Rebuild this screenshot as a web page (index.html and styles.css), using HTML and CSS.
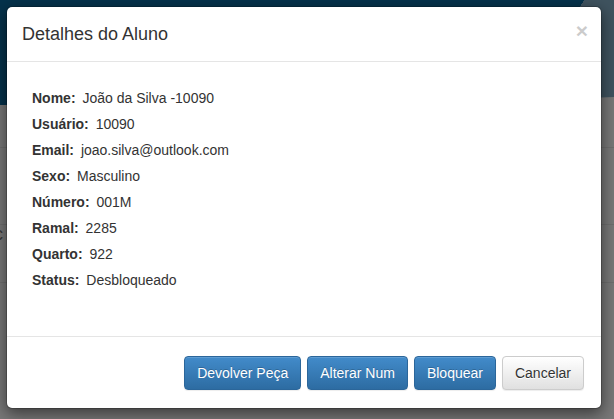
FILE: index.html
```html
<!DOCTYPE html>
<html lang="pt">
<head>
<meta charset="utf-8">
<title>Detalhes do Aluno</title>
<link rel="stylesheet" href="styles.css">
</head>
<body>
<div class="page">
  <div class="navbar"></div>
  <div class="content">
    <div class="row-line r1"></div>
    <div class="row-line r2"><span class="ghost">c</span></div>
    <div class="row-line r3"></div>
  </div>
</div>
<div class="backdrop"></div>
<div class="modal">
  <div class="modal-header">
    <h4 class="modal-title">Detalhes do Aluno</h4>
    <span class="close">&times;</span>
  </div>
  <div class="modal-body">
    <div class="field"><b>Nome:</b> João da Silva -10090</div>
    <div class="field"><b>Usuário:</b> 10090</div>
    <div class="field"><b>Email:</b> joao.silva@outlook.com</div>
    <div class="field"><b>Sexo:</b> Masculino</div>
    <div class="field"><b>Número:</b> 001M</div>
    <div class="field"><b>Ramal:</b> 2285</div>
    <div class="field"><b>Quarto:</b> 922</div>
    <div class="field"><b>Status:</b> Desbloqueado</div>
  </div>
  <div class="modal-footer">
    <button class="btn btn-primary">Devolver Peça</button>
    <button class="btn btn-primary">Alterar Num</button>
    <button class="btn btn-primary">Bloquear</button>
    <button class="btn btn-default">Cancelar</button>
  </div>
</div>
</body>
</html>
```
FILE: styles.css
```css
html, body {
  margin: 0;
  padding: 0;
  width: 614px;
  height: 419px;
  overflow: hidden;
  font-family: "Liberation Sans", Arial, Helvetica, sans-serif;
  font-size: 14px;
  line-height: 1.42857;
  color: #333;
}
.page {
  width: 614px;
  height: 419px;
  background: #f0f0f0;
}
.navbar {
  height: 105px;
  background: #0b6496;
  clip-path: polygon(0 0, 100% 0, 100% 97px, 0 105px);
  background-image: linear-gradient(125deg, #0b6496 85%, #7fa6bf 85%);
}
.content {
  display: flex;
  flex-direction: column;
}
.row-line {
  border-bottom: 1px solid #ddd;
  height: 42px;
  position: relative;
}
.r1 { height: 42px; }
.r2 { height: 76px; }
.r3 { height: 57px; }
.ghost {
  font-size: 18px;
  color: #777;
  margin-left: -6px;
  display: inline-block;
  margin-top: 74px;
}
.backdrop {
  position: absolute;
  left: 0;
  top: 0;
  width: 614px;
  height: 419px;
  background: rgba(0, 0, 0, 0.5);
}
.modal {
  position: absolute;
  left: 6px;
  top: 6px;
  width: 594px;
  background: #fff;
  border: 1px solid rgba(0, 0, 0, 0.2);
  border-radius: 6px;
  box-shadow: 0 5px 15px rgba(0, 0, 0, 0.5);
  background-clip: padding-box;
}
.modal-header {
  display: flex;
  justify-content: space-between;
  align-items: flex-start;
  padding: 15px 15px 13px 15px;
  border-bottom: 1px solid #e5e5e5;
}
.modal-title {
  margin: 0;
  font-size: 18px;
  font-weight: normal;
  line-height: 1.42857;
  color: #333;
}
.close {
  font-size: 21px;
  font-weight: bold;
  line-height: 1;
  color: #000;
  opacity: 0.2;
  margin-top: -2px;
  margin-right: -2px;
}
.modal-body {
  padding: 26px 20px 25px 25px;
}
.field {
  line-height: 20px;
  margin-bottom: 6px;
}
.field b {
  font-weight: bold;
  margin-right: 3px;
}
.modal-footer {
  display: flex;
  justify-content: flex-end;
  gap: 6px;
  padding: 19px 17px 18px 20px;
  margin-top: 15px;
  border-top: 1px solid #e5e5e5;
}
.btn {
  font-family: "Liberation Sans", Arial, Helvetica, sans-serif;
  font-size: 14px;
  line-height: 20px;
  padding: 6px 12px;
  border-radius: 4px;
  border: 1px solid transparent;
  cursor: pointer;
}
.btn-primary {
  color: #fff;
  background-image: linear-gradient(to bottom, #428bca 0, #2d6ca2 100%);
  border-color: #2b669a;
  text-shadow: 0 -1px 0 rgba(0, 0, 0, 0.2);
  box-shadow: inset 0 1px 0 rgba(255, 255, 255, 0.15), 0 1px 1px rgba(0, 0, 0, 0.075);
}
.btn-default {
  color: #333;
  background-image: linear-gradient(to bottom, #fff 0, #e0e0e0 100%);
  border-color: #ccc;
  text-shadow: 0 1px 0 #fff;
  box-shadow: inset 0 1px 0 rgba(255, 255, 255, 0.15), 0 1px 1px rgba(0, 0, 0, 0.075);
}
```
